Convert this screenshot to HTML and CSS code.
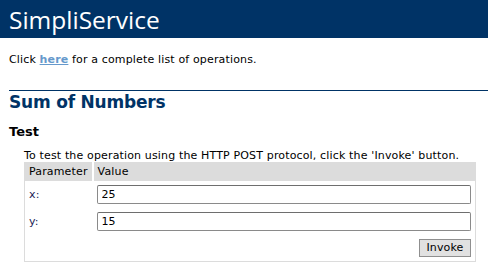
FILE: index.html
```html
<!DOCTYPE html>
<html>
<head>
<meta charset="utf-8">
<title>SimpliService</title>
<link rel="stylesheet" href="styles.css">
</head>
<body>
<div class="heading1">SimpliService</div>
<div class="content">
  <p class="intro">Click <a class="link" href="#">here</a> for a complete list of operations.</p>
  <h2 class="opname">Sum of Numbers</h2>
  <h3 class="section">Test</h3>
  <p class="frmtext">To test the operation using the HTTP POST protocol, click the 'Invoke' button.</p>
  <form class="frm">
    <table class="frmtable">
      <tr>
        <td class="frmheader first">Parameter</td>
        <td class="frmheader">Value</td>
      </tr>
      <tr>
        <td class="frmlabel">x:</td>
        <td class="frmcell"><input class="frminput" type="text" value="25"></td>
      </tr>
      <tr>
        <td class="frmlabel">y:</td>
        <td class="frmcell"><input class="frminput" type="text" value="15"></td>
      </tr>
      <tr>
        <td class="frmlabel"></td>
        <td class="frmcell right"><button class="button" type="button">Invoke</button></td>
      </tr>
    </table>
  </form>
</div>
</body>
</html>
```
FILE: styles.css
```css
html, body {
  margin: 0;
  padding: 0;
  background: #ffffff;
}
body {
  font-family: "DejaVu Sans", Verdana, sans-serif;
  font-size: 11px;
  letter-spacing: 0.15px;
  color: #000000;
}
.heading1 {
  background: #003366;
  color: #ffffff;
  font-family: "Open Sans", "DejaVu Sans", sans-serif;
  font-size: 24.5px;
  font-weight: normal;
  letter-spacing: 0;
  line-height: 32px;
  height: 32px;
  padding: 4px 0 2px 9px;
}
.content {
  padding-left: 9px;
}
.intro {
  margin: 15px 0 0 0;
  line-height: 13px;
}
.link {
  color: #6699cc;
  font-weight: bold;
  text-decoration: underline;
}
.opname {
  margin: 24px 0 0 0;
  border-top: 1px solid #003366;
  padding-top: 1px;
  font-size: 17px;
  letter-spacing: -0.2px;
  line-height: 21px;
  font-weight: bold;
  color: #003366;
}
.section {
  margin: 11px 0 0 0;
  font-size: 13px;
  letter-spacing: 0;
  line-height: 16px;
  font-weight: bold;
  color: #000000;
}
.frmtext {
  margin: 10px 0 0 15px;
  line-height: 12px;
}
.frm {
  margin: 0 0 0 15px;
}
.frmtable {
  border-collapse: collapse;
  border: 1px solid #dcdcdc;
  width: 452px;
}
.frmtable td {
  padding: 4px;
}
.frmtable td.frmheader {
  background: #dcdcdc;
  padding: 2px 4px;
  line-height: 14px;
}
.frmtable td.first {
  width: 1px;
  white-space: nowrap;
  border-right: 2px solid #ffffff;
}
.frmlabel {
  color: #1c2456;
  vertical-align: middle;
}
.right {
  text-align: right;
}
.frminput {
  display: block;
  box-sizing: border-box;
  width: 100%;
  height: 19px;
  margin: 0;
  padding: 0 4px;
  border: 1px solid #8a8a8a;
  border-top-color: #6e6e6e;
  border-radius: 2px;
  font-family: "DejaVu Sans", Verdana, sans-serif;
  font-size: 11px;
  color: #000000;
  background: #ffffff;
}
.button {
  box-sizing: border-box;
  height: 18px;
  width: 52px;
  margin: 0;
  padding: 0;
  border: 1px solid #8f8f8f;
  background: #e1e1e1;
  font-family: "DejaVu Sans", Verdana, sans-serif;
  font-size: 11px;
  letter-spacing: 0.15px;
  color: #000000;
  line-height: 16px;
  vertical-align: top;
}
```
